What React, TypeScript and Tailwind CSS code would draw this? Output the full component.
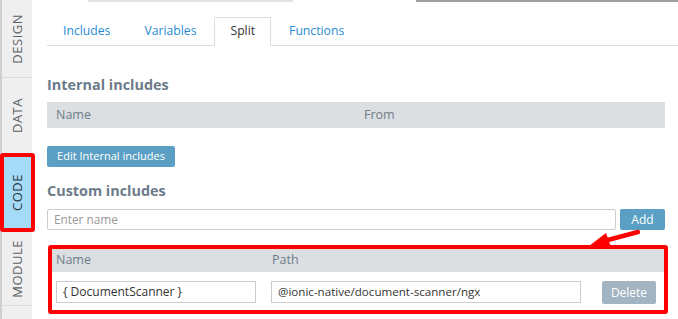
function SideTab({ label, cls }: { label: string; cls: string }) {
  return (
    <div className={`flex items-center justify-center ${cls}`}>
      <span className="[writing-mode:vertical-rl] rotate-180 text-[13px] leading-none tracking-[0.5px]">{label}</span>
    </div>
  );
}

export default function App() {
  return (
    <div className="relative w-[678px] h-[319px] flex overflow-hidden bg-white font-['Open_Sans',sans-serif]">
      <aside className="w-[32px] shrink-0 bg-[#efefef] border-l-2 border-[#cbd0d5] flex flex-col relative z-10">
        <SideTab label="DESIGN" cls="h-[78px] border-b border-[#dcdcdc] text-[#5d6166]" />
        <SideTab label="DATA" cls="h-[75px] text-[#5d6166]" />
        <SideTab
          label="CODE"
          cls="h-[79px] w-[35px] -ml-[2px] border-4 border-[#ff0000] rounded-[3px] bg-[#a3dbf8] text-[#2f3336]"
        />
        <SideTab label="MODULE" cls="h-[74px] border-b border-[#dcdcdc] text-[#5d6166]" />
      </aside>

      <main className="flex-1 flex flex-col">
        <div className="h-[2px] flex">
          <div className="w-[56px]" />
          <div className="w-[205px] bg-[#e1e3e5]" />
          <div className="w-[123px]" />
          <div className="flex-1 bg-[#9ea0a3]" />
        </div>

        <div className="ml-[15px] mt-[15px] flex items-end border-b border-[#dddddd]">
          <div className="h-[29px] -mb-px mr-[2px] px-[15px] border border-transparent flex items-center text-[12.2px] text-[#2a8dd4]">Includes</div>
          <div className="h-[29px] -mb-px mr-[2px] px-[15px] border border-transparent flex items-center text-[12.2px] text-[#2a8dd4]">Variables</div>
          <div className="h-[29px] -mb-px mr-[2px] px-[15px] border border-[#dddddd] border-b-white bg-white rounded-t-[2px] flex items-center text-[12.2px] text-[#333]">Split</div>
          <div className="h-[29px] -mb-px mr-[2px] px-[15px] border border-transparent flex items-center text-[12.2px] text-[#2a8dd4]">Functions</div>
        </div>

        <div className="ml-[15px] w-[618px] flex flex-col">
          <div className="mt-[29px] h-[20px] leading-[20px] text-[14.4px] font-bold text-[#6c7b8a]">Internal includes</div>

          <div className="mt-[7px] h-[26px] bg-[#dcdfe2] flex items-center text-[12.5px] text-[#6f7c89]">
            <span className="pl-[9px] w-[317px]">Name</span>
            <span>From</span>
          </div>

          <div className="mt-[18px] flex">
            <div className="h-[21px] w-[128px] bg-[#5b9fc4] rounded-[2px] text-white text-[11px] flex items-center justify-center">Edit Internal includes</div>
          </div>

          <div className="mt-[14px] h-[20px] leading-[20px] text-[14.4px] font-bold text-[#6c7b8a]">Custom includes</div>

          <div className="mt-[8px] flex gap-[4px]">
            <div className="h-[21px] w-[569px] border border-[#cccccc] rounded-[2px] px-[6px] flex items-center text-[11.8px] text-[#999]">Enter name</div>
            <div className="h-[21px] w-[45px] bg-[#5b9fc4] rounded-[2px] text-white text-[12px] flex items-center justify-center">Add</div>
          </div>

          <div className="mt-[15px] ml-px w-[620px] h-[69px] border-4 border-[#ff0000] rounded-[3px] flex flex-col">
            <div className="h-[23px] bg-[#dcdfe2] flex items-center text-[12.5px] text-[#6f7c89]">
              <span className="pl-[4px] w-[220px]">Name</span>
              <span>Path</span>
            </div>
            <div className="pt-[9px] pl-[4px] flex items-start">
              <div className="h-[22px] w-[200px] border border-[#cccccc] px-[6px] flex items-center text-[12px] text-[#333]">{"{ DocumentScanner }"}</div>
              <div className="ml-[15px] h-[22px] w-[310px] border border-[#cccccc] px-[6px] flex items-center text-[11.6px] text-[#333]">@ionic-native/document-scanner/ngx</div>
              <div className="ml-[21px] h-[23px] w-[54px] bg-[#a2b4c2] rounded-[2px] text-white text-[12px] flex items-center justify-center">Delete</div>
            </div>
          </div>
        </div>
      </main>

      <svg className="absolute left-0 top-0 pointer-events-none" width="678" height="319" viewBox="0 0 678 319">
        <line x1="638" y1="232" x2="604" y2="241" stroke="#ff0000" strokeWidth="4.5" strokeLinecap="round" />
        <polygon points="589,246 606,233 611,247" fill="#ff0000" />
      </svg>
    </div>
  );
}
